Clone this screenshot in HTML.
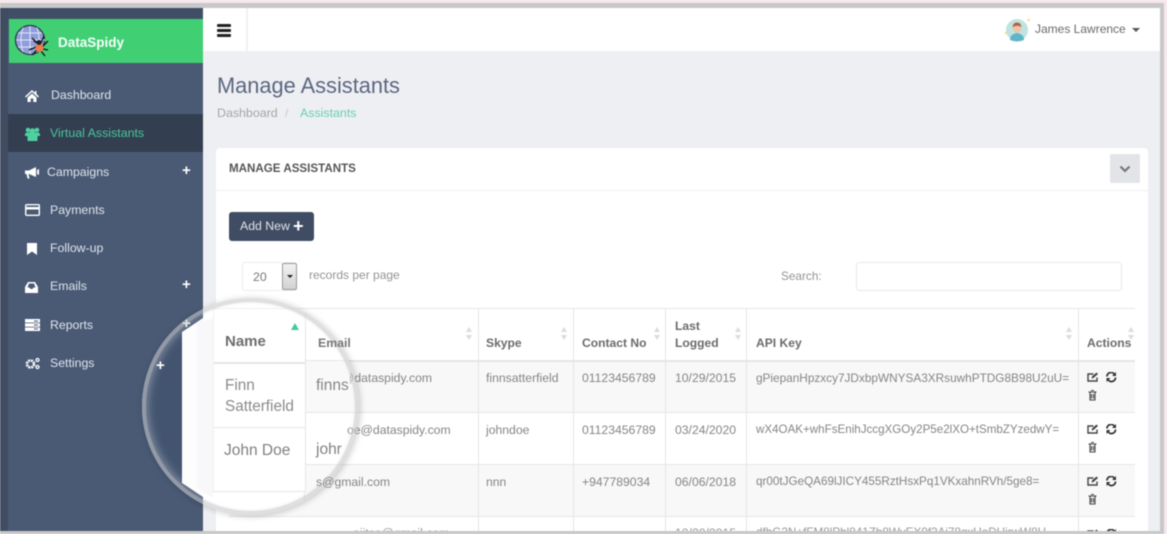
<!DOCTYPE html>
<html lang="en"><head><meta charset="utf-8"><title>Manage Assistants</title>
<style>
*{box-sizing:border-box}
html,body{margin:0;padding:0;background:#f6e9ee}
#p{position:relative;width:1167px;height:534px;overflow:hidden;background:#f6e9ee;font-family:"Liberation Sans",sans-serif;color:#7b7b7b;filter:blur(.5px)}
.a{position:absolute}
.t{position:absolute;white-space:nowrap;line-height:16px;font-size:12px}
.n{color:#dfe4ec;font-size:12.3px;left:51px}
.pl{color:#fff;font-size:15px;font-weight:bold;left:182px}
.h{font-weight:bold;color:#6b6b6b;font-size:12.1px}
.c{color:#858585;font-size:12.2px}
.v{position:absolute;width:1px;background:#e6e6e6}
.hl{position:absolute;height:1px;background:#e6e6e6}
.sort{position:absolute;width:6px;height:13px}
.cut{clip-path:inset(0 0 0 8px)}
</style></head><body><div id="p">
<!-- frame -->
<div class="a" style="left:0;top:3px;width:1164px;height:531px;background:#c8c7c9"></div>
<div class="a" style="left:0;top:8px;width:1160px;height:523px;background:#eeeff3;overflow:hidden">
</div>
<!-- sidebar -->
<div class="a" style="left:0;top:8px;width:203px;height:523px;background:#4a5a75"></div>
<div class="a" style="left:0;top:8px;width:8px;height:523px;background:#3f4c62"></div>
<div class="a" style="left:8px;top:8px;width:195px;height:11px;background:#414f66"></div>
<div class="a" style="left:9px;top:19px;width:194px;height:44px;background:#41cf74"></div>
<svg class="a" style="left:15px;top:24px" width="34" height="34" viewBox="0 0 34 34">
<circle cx="15" cy="16" r="14.5" fill="#8f9ed8" stroke="#2b3040" stroke-width="1.2"/>
<path d="M1 16H30M3 9H27M3 23H27M15 2V30M8 3.5Q4 16 8 28M22 3.5Q26 16 22 28" stroke="#dfe4f6" stroke-width="1" fill="none"/>
<path d="M24 21L17 14M25 21L29 12M28 22L33 17M28 25L33 26M26 27L30 32M22 26L17 31M21 23L14 26M22 19L19 17" stroke="#111" stroke-width="1.3" fill="none"/>
<circle cx="24.500" cy="24" r="4" fill="#f2794a"/><circle cx="24" cy="18.500" r="2.500" fill="#222"/>
</svg>
<div class="t" style="left:58px;top:35px;color:#f4fff8;font-weight:bold;font-size:13.500px">DataSpidy</div>
<div class="a" style="left:8px;top:114px;width:195px;height:38px;background:#343e51"></div>
<svg class="a" style="left:25px;top:90px" width="14" height="12" viewBox="0 0 14 12"><path d="M7 0L0 6.500L1 7.500L7 2L13 7.500L14 6.500L11.500 4V1H10V2.800ZM2.500 7.500V12H5.700V8.500H8.300V12H11.500V7.500L7 3.500Z" fill="#fff"/></svg>
<div class="t n" style="top:87px">Dashboard</div>
<svg class="a" style="left:25px;top:127px" width="15" height="14" viewBox="0 0 15 14"><circle cx="3" cy="3" r="2.300" fill="#4fd0a0"/><circle cx="12" cy="3" r="2.300" fill="#4fd0a0"/><circle cx="7.500" cy="4" r="2.800" fill="#4fd0a0"/><path d="M0 9V6.500L2 5.500H13L15 6.500V9H12.500V14H2.500V9Z" fill="#4fd0a0"/></svg>
<div class="t" style="left:50px;top:125px;color:#46c69a;font-size:12.400px">Virtual Assistants</div>
<svg class="a" style="left:25px;top:166px" width="14" height="13" viewBox="0 0 14 13"><path d="M0 4.500H4L11 1V11L4 8H3.500L4.500 12.500H2.500L1.500 8H0ZM12 4L14 3V9L12 8Z" fill="#fff"/></svg>
<div class="t n" style="left:47px;top:164px">Campaigns</div><div class="t pl" style="top:163px">+</div>
<svg class="a" style="left:25px;top:204px" width="15" height="12" viewBox="0 0 15 12"><rect x=".7" y=".7" width="13.600" height="10.600" rx="1" fill="none" stroke="#fff" stroke-width="1.400"/><rect x="1" y="3" width="13" height="2.500" fill="#fff"/></svg>
<div class="t n" style="left:50px;top:202px">Payments</div>
<svg class="a" style="left:27px;top:243px" width="10" height="12" viewBox="0 0 10 12"><path d="M0 0H10V12L5 8.500L0 12Z" fill="#fff"/></svg>
<div class="t n" style="left:50px;top:240px">Follow-up</div>
<svg class="a" style="left:25px;top:282px" width="13" height="11" viewBox="0 0 13 11"><path d="M3 0H10L13 5V11H0V5ZM2.500 5.500H4.500L5.500 7H7.500L8.500 5.500H10.500L9 1.500H4Z" fill="#fff"/></svg>
<div class="t n" style="left:50px;top:278px">Emails</div><div class="t pl" style="top:277px">+</div>
<svg class="a" style="left:25px;top:319px" width="15" height="12" viewBox="0 0 15 12"><path d="M0 0H15V3.500H0ZM0 4.300H15V7.700H0ZM0 8.500H15V12H0Z" fill="#fff"/><path d="M9 2H13M9 6H13M9 10H13" stroke="#4a5a75"/></svg>
<div class="t n" style="left:50px;top:317px">Reports</div><div class="t pl" style="top:316px">+</div>
<svg class="a" style="left:25px;top:357px" width="15" height="13" viewBox="0 0 15 13"><circle cx="5.500" cy="7" r="3.500" fill="none" stroke="#fff" stroke-width="2.600" stroke-dasharray="2 .8"/><circle cx="12.500" cy="3" r="1.500" fill="none" stroke="#fff" stroke-width="1.300"/><circle cx="12.500" cy="10" r="1.500" fill="none" stroke="#fff" stroke-width="1.300"/></svg>
<div class="t n" style="left:50px;top:355px">Settings</div>
<!-- header -->
<div class="a" style="left:203px;top:8px;width:957px;height:43px;background:#fff"></div>
<div class="a" style="left:246px;top:8px;width:2px;height:43px;background:#f1f1f4"></div>
<div class="a" style="left:217px;top:24px;width:14px;height:3px;background:#222;box-shadow:0 5px 0 #222,0 10px 0 #222;border-radius:1px"></div>
<svg class="a" style="left:1004px;top:17px" width="26" height="26" viewBox="0 0 26 26"><circle cx="13" cy="13" r="11" fill="#bfe3e0"/><path d="M6 23Q6 17 13 16Q20 17 20 23Q13 26 6 23Z" fill="#5fb5c6"/><circle cx="13" cy="11" r="4.600" fill="#eec4a8"/><path d="M8.500 10Q9 5.500 13 5.500Q17 5.500 17.500 10Q14 7.500 8.500 10Z" fill="#b3663f"/><circle cx="24.500" cy="3" r="1.300" fill="#f5dc8a"/><circle cx="2" cy="16" r="1.200" fill="#f5dc8a"/></svg>
<div class="t" style="left:1035px;top:21px;font-size:12px;color:#6a6a6a">James Lawrence</div>
<div class="a" style="left:1132px;top:28px;border:4px solid transparent;border-top-color:#555;border-bottom:0"></div>
<!-- title -->
<div class="t" style="left:217px;top:72px;line-height:28px;font-size:21.800px;color:#5b6780">Manage Assistants</div>
<div class="t" style="left:217px;top:105px;color:#a5a5a5;font-size:12.400px">Dashboard</div>
<div class="t" style="left:285px;top:105px;color:#c8c8c8">/</div>
<div class="t" style="left:300px;top:105px;color:#69d0ab;font-size:12.400px">Assistants</div>
<!-- panel -->
<div class="a" style="left:216px;top:148px;width:932px;height:383px;background:#fff;border-radius:4px 4px 0 0"></div>
<div class="hl" style="left:216px;top:190px;width:932px;background:#f0f0f0"></div>
<div class="t" style="left:229px;top:161px;font-weight:bold;font-size:11.600px;color:#565656">MANAGE ASSISTANTS</div>
<div class="a" style="left:1110px;top:154px;width:30px;height:29px;background:#e3e4e8;border-radius:2px"></div>
<svg class="a" style="left:1119px;top:165px" width="12" height="8" viewBox="0 0 12 8"><path d="M1.500 1.500L6 6L10.500 1.500" fill="none" stroke="#777" stroke-width="2.200"/></svg>
<div class="a" style="left:229px;top:212px;width:85px;height:29px;background:#3f4c63;border-radius:3px"></div>
<div class="t" style="left:240px;top:218px;color:#dfe3ea;font-size:12.300px">Add New</div>
<div class="t" style="left:293px;top:216px;color:#fff;font-size:18px;font-weight:bold;line-height:20px">+</div>
<div class="a" style="left:242px;top:262px;width:55px;height:29px;border:1px solid #ececec;border-radius:3px;background:#fff"></div>
<div class="t" style="left:253px;top:269px;color:#777;font-size:12.300px">20</div>
<div class="a" style="left:282px;top:263px;width:15px;height:27px;background:linear-gradient(#f2f2f2,#d2d2d2);border:1px solid #999;border-radius:2px"></div>
<div class="a" style="left:287px;top:275px;border:3px solid transparent;border-top-color:#222;border-bottom:0"></div>
<div class="t" style="left:309px;top:267px;color:#949494;font-size:12px">records per page</div>
<div class="t" style="left:781px;top:268px;color:#949494;font-size:11.800px">Search:</div>
<div class="a" style="left:856px;top:262px;width:266px;height:29px;border:1px solid #e9e9e9;border-radius:3px"></div>
<!-- table -->
<div class="a" style="left:229px;top:362px;width:906px;height:51px;background:#f8f8f8"></div>
<div class="a" style="left:229px;top:465px;width:906px;height:52px;background:#f8f8f8"></div>
<div class="hl" style="left:229px;top:308px;width:906px"></div>
<div class="hl" style="left:229px;top:360px;width:906px;height:2px"></div>
<div class="hl" style="left:229px;top:412px;width:906px"></div>
<div class="hl" style="left:229px;top:464px;width:906px"></div>
<div class="hl" style="left:229px;top:516px;width:906px"></div>
<div class="v" style="left:478px;top:308px;height:223px"></div>
<div class="v" style="left:573px;top:308px;height:223px"></div>
<div class="v" style="left:665px;top:308px;height:223px"></div>
<div class="v" style="left:746px;top:308px;height:223px"></div>
<div class="v" style="left:1078px;top:308px;height:223px"></div>
<div class="t h" style="left:486px;top:335px">Skype</div>
<div class="t h" style="left:582px;top:335px">Contact No</div>
<div class="t h" style="left:675px;top:318px">Last</div>
<div class="t h" style="left:675px;top:335px">Logged</div>
<div class="t h" style="left:756px;top:335px">API Key</div>
<div class="t h" style="left:1087px;top:335px">Actions</div>
<svg width="0" height="0" style="position:absolute"><defs><g id="s"><path d="M3 0L6 5H0ZM3 13L0 8H6Z" fill="#dcdcdc"/></g></defs></svg>
<svg class="sort" style="left:466px;top:327px"><use href="#s"/></svg>
<svg class="sort" style="left:561px;top:327px"><use href="#s"/></svg>
<svg class="sort" style="left:654px;top:327px"><use href="#s"/></svg>
<svg class="sort" style="left:735px;top:327px"><use href="#s"/></svg>
<svg class="sort" style="left:1066px;top:327px"><use href="#s"/></svg>
<svg class="sort" style="left:1128px;top:327px"><use href="#s"/></svg>
<div class="t c cut" style="left:342px;top:370px">@dataspidy.com</div>
<div class="t c" style="left:486px;top:370px">finnsatterfield</div>
<div class="t c" style="left:582px;top:370px">01123456789</div>
<div class="t c" style="left:675px;top:370px">10/29/2015</div>
<div class="t c" style="left:756px;top:370px;font-size:11.800px">gPiepanHpzxcy7JDxbpWNYSA3XRsuwhPTDG8B98U2uU=</div>
<div class="t c" style="left:347px;top:422px">oe@dataspidy.com</div>
<div class="t c" style="left:486px;top:422px">johndoe</div>
<div class="t c" style="left:582px;top:422px">01123456789</div>
<div class="t c" style="left:675px;top:422px">03/24/2020</div>
<div class="t c" style="left:756px;top:422px;font-size:11.600px">wX4OAK+whFsEnihJccgXGOy2P5e2lXO+tSmbZYzedwY=</div>
<div class="t c" style="left:486px;top:474px">nnn</div>
<div class="t c" style="left:582px;top:474px">+947789034</div>
<div class="t c" style="left:675px;top:474px">06/06/2018</div>
<div class="t c" style="left:756px;top:474px;font-size:11.700px">qr00tJGeQA69lJICY455RztHsxPq1VKxahnRVh/5ge8=</div>
<div class="t c" style="left:675px;top:525px;color:#999">10/20/2015</div>
<div class="t c" style="left:756px;top:525px;color:#999;font-size:11.700px">dfhG2N+fFM8lPbl841Zb8WvEX9f3Ai78qxUoDUjrwW8U</div>
<div class="t c" style="left:353px;top:525px;color:#999">ajitsa@gmail.com</div>
<svg width="0" height="0" style="position:absolute"><defs><g id="i" fill="none" stroke="#444"><path d="M10 5.500V9H1V2H6.500" stroke-width="1.400"/><path d="M4.500 6.500L5 4.500L9.500 0.500L11 2L6.500 6Z" fill="#444" stroke="none"/><path d="M20 4.500A4 4 0 0 1 27.500 2.500M28.500 5.500A4 4 0 0 1 21 7.500" stroke-width="1.800" stroke="#333"/><path d="M29 0V4H25ZM19.500 10V6H23.500Z" fill="#333" stroke="none"/><path d="M1.500 20H9.500M3 20V28H8V20M4 18.500H7M4.500 22V26.500M6.500 22V26.500" stroke-width="1.100"/></g></defs></svg>
<svg class="a" style="left:1087px;top:372px" width="32" height="30"><use href="#i"/></svg>
<svg class="a" style="left:1087px;top:424px" width="32" height="30"><use href="#i"/></svg>
<svg class="a" style="left:1087px;top:476px" width="32" height="30"><use href="#i"/></svg>
<svg class="a" style="left:1087px;top:529px" width="32" height="10"><use href="#i"/></svg>
<!-- magnifier -->
<div class="a" style="left:142px;top:298px;width:217px;height:217px;border-radius:50%;overflow:hidden;background:#fff">
  <div class="a" style="left:-142px;top:-298px;width:400px;height:534px">
    <div class="a" style="left:140px;top:296px;width:42px;height:225px;background:#435470"></div>
    <div class="a" style="left:182px;top:296px;width:21px;height:225px;background:#435470"></div>
    <div class="a" style="left:182px;top:296px;width:21px;height:225px;background:#fdfdfe;clip-path:polygon(0 36px,100% 22px,100% 201px,0 187px)"></div>
    <div class="a" style="left:197px;top:318px;width:16px;height:180px;background:#f8f8fb;clip-path:polygon(0 4px,100% 0,100% 100%,0 calc(100% - 10px))"></div>
    <div class="a" style="left:213px;top:296px;width:150px;height:225px;background:#fff"></div>
    <div class="a" style="left:306px;top:360px;width:60px;height:53px;background:#f9f9f9"></div>
    <div class="a" style="left:306px;top:465px;width:60px;height:52px;background:#f9f9f9"></div>
    <div class="hl" style="left:213px;top:308px;width:150px;background:#efefef"></div>
    <div class="hl" style="left:213px;top:362px;width:93px;height:2px;background:#e6e6e6"></div>
    <div class="hl" style="left:306px;top:360px;width:60px;height:1px"></div>
    <div class="hl" style="left:213px;top:427px;width:93px"></div>
    <div class="hl" style="left:306px;top:412px;width:60px"></div>
    <div class="hl" style="left:306px;top:464px;width:60px"></div>
    <div class="hl" style="left:213px;top:491px;width:93px"></div>
    <div class="v" style="left:213px;top:308px;height:183px;background:#f0f0f0"></div>
    <div class="v" style="left:305px;top:308px;height:183px;background:#e6e6e6"></div>
    <div class="v" style="left:229px;top:517px;height:20px"></div>
    <div class="v" style="left:304px;top:491px;height:40px"></div>
    <div class="a" style="left:291px;top:323px;border:4.500px solid transparent;border-bottom:7px solid #46c99a;border-top:0"></div>
    <div class="t" style="left:225px;top:333px;line-height:18px;font-size:15px;font-weight:bold;color:#6d6d6d">Name</div>
    <div class="t" style="left:225px;top:375px;font-size:15.300px;line-height:21px;color:#8b8b8b">Finn<br>Satterfield</div>
    <div class="t" style="left:224px;top:442px;font-size:15.500px;line-height:18px;color:#808080">John Doe</div>
    <div class="t" style="left:316px;top:376px;font-size:15.500px;line-height:20px;color:#858585">finns</div>
    <div class="t" style="left:316px;top:441px;font-size:15.500px;line-height:18px;color:#808080">johr</div>
    <div class="t c cut" style="left:342px;top:370px">@dataspidy.com</div>
    <div class="t c" style="left:347px;top:422px">oe@dataspidy.com</div>
    <div class="t pl" style="left:156px;top:358px">+</div>
    <div class="t pl" style="left:182px;top:316px">+</div>
  </div>
</div>
<div class="a" style="left:142px;top:298px;width:217px;height:217px;border-radius:50%;border:4px solid rgba(200,202,204,.6);box-shadow:1px 1px 7px rgba(0,0,0,.22),inset 0 0 10px rgba(255,255,255,.5),inset 0 0 3px rgba(0,0,0,.12)"></div>
<div class="t" style="left:318px;top:335px;font-size:12.300px;font-weight:bold;color:#777">Email</div>
<div class="t c" style="left:316px;top:474px">s@gmail.com</div>
<!-- bottom / right edges -->
<div class="a" style="left:0;top:531px;width:1164px;height:3px;background:#c8c7c9"></div>
<div class="a" style="left:1160px;top:3px;width:4px;height:531px;background:#c8c7c9"></div>
</div></body></html>
